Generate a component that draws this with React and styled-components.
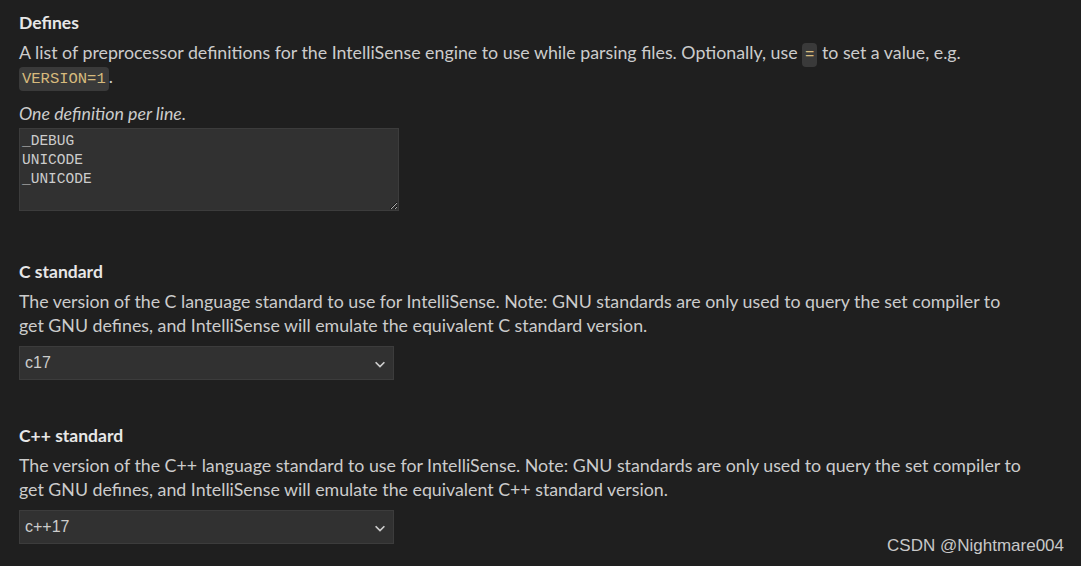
import styled, { createGlobalStyle } from 'styled-components';

const GlobalStyle = createGlobalStyle`
  html, body {
    margin: 0;
    background: #1f1f1f;
  }
  body {
    font-family: Lato, "Noto Sans", sans-serif;
    color: #cccccc;
  }
`;

const Page = styled.div`
  position: relative;
  width: 1081px;
  height: 566px;
  overflow: hidden;
  padding: 12px 0 0 19px;
  box-sizing: border-box;
`;

const Setting = styled.section`
  width: 1005px;
  margin-bottom: ${(p) => p.$gap || 0}px;
`;

const Title = styled.div`
  font-size: 17.5px;
  font-weight: 700;
  color: #e7e7e7;
  line-height: 22px;
`;

const Description = styled.div`
  font-size: 17.8px;
  line-height: 24px;
  margin-top: 6px;
`;

const Code = styled.code`
  font-family: "Liberation Mono", monospace;
  font-size: 15.5px;
  line-height: 1;
  color: #d7ba7d;
  background: #3a3a3a;
  border-radius: 4px;
  padding: 3px 3px;
`;

const Hint = styled.div`
  font-size: 17.8px;
  font-style: italic;
  line-height: 24px;
  margin-top: 13px;
`;

const TextArea = styled.textarea`
  display: block;
  box-sizing: border-box;
  width: 380px;
  height: 83px;
  margin-top: 3px;
  padding: 3px 2px;
  background: #313131;
  border: 1px solid #3c3c3c;
  color: #cccccc;
  font-family: "Liberation Mono", monospace;
  font-size: 14.5px;
  line-height: 19px;
  resize: vertical;
  outline: none;
`;

const SelectBox = styled.div`
  position: relative;
  width: 375px;
  height: 34px;
  margin-top: 9px;
  box-sizing: border-box;
  background: #313131;
  border: 1px solid #3c3c3c;
  display: flex;
  align-items: center;
  padding: 0 5px;
  font-family: "Liberation Sans", Arial, sans-serif;
  font-size: 16px;
  color: #cccccc;
`;

const Chevron = styled.svg`
  position: absolute;
  right: 6px;
  top: 10px;
`;

const Watermark = styled.div`
  position: absolute;
  right: 17px;
  bottom: 10px;
  font-family: "Liberation Sans", Arial, sans-serif;
  font-size: 17px;
  color: #c8c8c8;
`;

function Select({ value }) {
  return (
    <SelectBox>
      {value}
      <Chevron width="14" height="14" viewBox="0 0 16 16">
        <path d="M3 6l5 5 5-5" fill="none" stroke="#cccccc" strokeWidth="2" />
      </Chevron>
    </SelectBox>
  );
}

export default function App() {
  return (
    <>
      <GlobalStyle />
      <Page>
        <Setting $gap={50}>
          <Title>Defines</Title>
          <Description>
            A list of preprocessor definitions for the IntelliSense engine to use while parsing
            files. Optionally, use <Code>=</Code> to set a value, e.g. <Code>VERSION=1</Code>.
          </Description>
          <Hint>One definition per line.</Hint>
          <TextArea defaultValue={'_DEBUG\nUNICODE\n_UNICODE'} spellCheck={false} />
        </Setting>
        <Setting $gap={45}>
          <Title>C standard</Title>
          <Description>
            The version of the C language standard to use for IntelliSense. Note: GNU standards
            are only used to query the set compiler to get GNU defines, and IntelliSense will
            emulate the equivalent C standard version.
          </Description>
          <Select value="c17" />
        </Setting>
        <Setting>
          <Title>C++ standard</Title>
          <Description>
            The version of the C++ language standard to use for IntelliSense. Note: GNU standards
            are only used to query the set compiler to get GNU defines, and IntelliSense will
            emulate the equivalent C++ standard version.
          </Description>
          <Select value="c++17" />
        </Setting>
        <Watermark>CSDN @Nightmare004</Watermark>
      </Page>
    </>
  );
}
